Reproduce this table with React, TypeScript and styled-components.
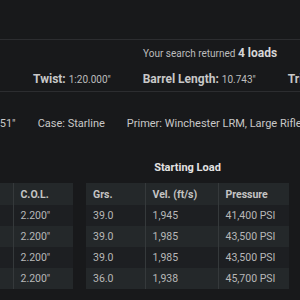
import styled, { createGlobalStyle } from 'styled-components';

const GlobalStyle = createGlobalStyle`
  html, body {
    margin: 0;
    padding: 0;
    background: #18191b;
  }
  body {
    font-family: Roboto, "Liberation Sans", sans-serif;
  }
`;

const leftRows = [
  { powder: 'Varget', col: '2.200"' },
  { powder: 'Varget', col: '2.200"' },
  { powder: 'Varget', col: '2.200"' },
  { powder: 'Varget', col: '2.200"' },
];

const startRows = [
  { grs: '39.0', vel: '1,945', pressure: '41,400 PSI' },
  { grs: '39.0', vel: '1,985', pressure: '43,500 PSI' },
  { grs: '39.0', vel: '1,985', pressure: '43,500 PSI' },
  { grs: '36.0', vel: '1,938', pressure: '45,700 PSI' },
];

function App() {
  return (
    <Page>
      <GlobalStyle />
      <TopBar />
      <Summary>
        Your search returned <strong>4 loads</strong>
      </Summary>
      <SpecRow>
        <Spec>
          Twist: <SpecValue>1:20.000"</SpecValue>
        </Spec>
        <Spec>
          Barrel Length: <SpecValue>10.743"</SpecValue>
        </Spec>
        <Spec>
          Trim Length: <SpecValue>1.750"</SpecValue>
        </Spec>
      </SpecRow>
      <PartsRow>
        <Part>Bullet Length: 1.051"</Part>
        <Divider />
        <Part>Case: Starline</Part>
        <Divider />
        <Part>Primer: Winchester LRM, Large Rifle Magnum</Part>
      </PartsRow>
      <Tables>
        <LeftBlock>
          <Caption>&nbsp;</Caption>
          <Table>
            <thead>
              <tr>
                <Th width={120}>Powder</Th>
                <Th width={60}>C.O.L.</Th>
              </tr>
            </thead>
            <tbody>
              {leftRows.map((r, i) => (
                <Tr key={i} odd={i % 2 === 1}>
                  <Td>{r.powder}</Td>
                  <Td>{r.col}</Td>
                </Tr>
              ))}
            </tbody>
          </Table>
        </LeftBlock>
        <RightBlock>
          <Caption>Starting Load</Caption>
          <Table>
            <thead>
              <tr>
                <Th width={59}>Grs.</Th>
                <Th width={73}>Vel. (ft/s)</Th>
                <Th width={71}>Pressure</Th>
              </tr>
            </thead>
            <tbody>
              {startRows.map((r, i) => (
                <Tr key={i} odd={i % 2 === 1}>
                  <Td>{r.grs}</Td>
                  <Td>{r.vel}</Td>
                  <Td>{r.pressure}</Td>
                </Tr>
              ))}
            </tbody>
          </Table>
        </RightBlock>
      </Tables>
    </Page>
  );
}

export default App;

const Page = styled.div`
  width: 300px;
  height: 300px;
  overflow: hidden;
  background: #18191b;
  color: #c9c9c9;
`;

const TopBar = styled.div`
  height: 39px;
  border-bottom: 1px solid #2c2d30;
`;

const Summary = styled.div`
  padding: 6px 0 0 143px;
  height: 20px;
  font-size: 10px;
  line-height: 15px;
  color: #bdbdbd;
  white-space: nowrap;

  strong {
    font-size: 12px;
    font-weight: 700;
    color: #d6d6d6;
  }
`;

const SpecRow = styled.div`
  display: flex;
  gap: 32px;
  padding-left: 33px;
  height: 25px;
  align-items: center;
  border-bottom: 1px solid #2c2d30;
  white-space: nowrap;
`;

const Spec = styled.div`
  font-size: 12px;
  font-weight: 700;
  color: #c8c8c8;
`;

const SpecValue = styled.span`
  font-size: 10px;
  font-weight: 400;
  color: #bdbdbd;
`;

const PartsRow = styled.div`
  display: flex;
  align-items: center;
  gap: 11px;
  margin-left: -85px;
  height: 62px;
  white-space: nowrap;
  font-size: 11px;
  color: #c8c8c8;
`;

const Part = styled.span``;

const Divider = styled.span`
  width: 1px;
  height: 13px;
  background: #3a3c40;
`;

const Tables = styled.div`
  display: flex;
  gap: 13px;
  margin-top: 7px;
`;

const LeftBlock = styled.div`
  margin-left: -107px;
`;

const RightBlock = styled.div``;

const Caption = styled.div`
  height: 22px;
  font-size: 11px;
  font-weight: 700;
  text-align: center;
  color: #e2e2e2;
  line-height: 14px;
`;

const Table = styled.table`
  border-collapse: collapse;
  table-layout: fixed;
  font-size: 10.5px;
`;

const Th = styled.th<{ width: number }>`
  width: ${(p) => p.width}px;
  height: 22px;
  padding: 0 7px;
  text-align: left;
  font-weight: 700;
  color: #c4c4c4;
  background: #24282a;
  border-left: 1px solid #35393b;
  box-sizing: border-box;

  &:first-child {
    border-left: none;
  }
`;

const Tr = styled.tr<{ odd: boolean }>`
  background: ${(p) => (p.odd ? '#24282a' : '#1d1f22')};
`;

const Td = styled.td`
  height: 21px;
  padding: 0 7px;
  color: #b8b8b8;
  border-left: 1px solid #35393b;
  white-space: nowrap;

  &:first-child {
    border-left: none;
  }
`;
